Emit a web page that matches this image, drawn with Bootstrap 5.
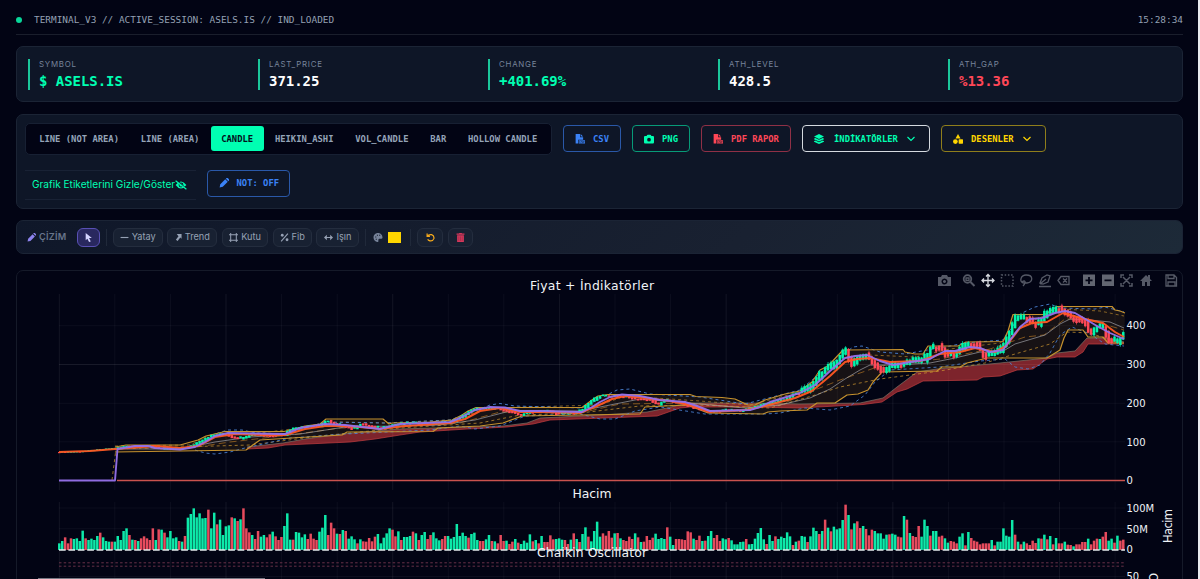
<!DOCTYPE html>
<html lang="tr" data-bs-theme="dark">
<head>
<meta charset="utf-8">
<meta name="viewport" content="width=device-width, initial-scale=1">
<title>Terminal V3</title>
<link href="https://cdn.jsdelivr.net/npm/bootstrap@5.3.0/dist/css/bootstrap.min.css" rel="stylesheet">
<style>
:root{--mint:#00ffb2;--rose:#ff4757;--azure:#3b82f6;--gold:#ffd500;--mono:"DejaVu Sans Mono",monospace}
body{background:#020414;font-family:Inter,sans-serif;height:579px;overflow:hidden;color:#8d99ad;border-right:2px solid #e9ebee}
.page{padding:0 15px 0 16px;height:579px;overflow:hidden}
.topline{height:35px;border-bottom:1px solid #1a1e2c;font:9.42px/14px var(--mono);color:#94a0b3;padding-top:5px}
.pulse{width:6px;height:6px;border-radius:50%;background:#08d79a;margin-right:12px}
.panel{background:#0e1627;border:1px solid #1b2435;border-radius:7px}
.stats{margin-top:11px;height:56px;padding:11.5px 0 0 11px}
.stat{width:230px;height:31px;border-left:2px solid #1bc79b;padding-left:9px}
.stat-name{font-size:7.9px;line-height:10px;letter-spacing:.75px;color:#77849a}
.stat-val{font:bold 14px/18px var(--mono);margin-top:3px;color:#fff;letter-spacing:-.05px}
.tools{margin-top:12px;height:95px;padding:7.5px 8px 8px 7.5px;column-gap:11px;row-gap:15px}
.seg{background:#020414;border:1px solid #172033;border-radius:5px;height:32px;padding:0 3px;width:527.5px;gap:.5px}
.seg .btn,.out{font:bold 8.86px/12px var(--mono);border-radius:3px;white-space:nowrap}
.seg .btn{color:#94a3b8;padding:0 10.65px;height:25px;border:0}
.seg .btn.active{background:var(--mint);color:#03101c}
.out{height:27px;border:1px solid;background:transparent;padding:0 0 0 11px;display:flex;align-items:center;border-radius:4px}
.out svg{width:10px;height:10px;margin-right:8px}
.out .chev{width:8px;height:8px;margin:0 0 0 9px}
.lbl{width:171px;height:30px;border:solid #192235;border-width:1px 0;font-size:10.1px;color:var(--mint);padding:1px 0 0 7.5px;white-space:nowrap}
.draw{margin-top:11px;height:34px;padding-left:10px;background:linear-gradient(135deg,#0f1729,#192131 62%,#1d2a38);font-size:9.2px;font-weight:500}
.draw svg{width:9px;height:9px}
.tb{height:19px;border:1px solid #242d3e;border-radius:6px;background:#182132;color:#96a1b4;gap:3px;margin-right:4.7px}
.tb.on{background:#29285f;border-color:#5950b5;color:#d4d3ff}
.sep{width:1px;height:17px;background:#20293a}
.chart{margin-top:16px;border:1px solid #151a29;border-radius:7px;height:330px}
.chart svg{display:block;margin:-1px}
.chart text{font-family:"DejaVu Sans",Verdana,sans-serif;fill:#f0f3f7}
.hbar{position:absolute;left:38px;top:578px;width:227px;height:1px;background:#777984}
</style>
</head>
<body>
<svg width="0" height="0" class="position-absolute">
<symbol id="pencil" viewBox="0 0 16 16"><path fill="currentColor" d="M1 15l1-5 8-8 4 4-8 8zM11 1l1-1h2l2 2v2l-1 1z"/></symbol>
<symbol id="camera" viewBox="0 0 512 512"><path fill="currentColor" d="M149 65l-10 31H64C29 96 0 125 0 160v256c0 35 29 64 64 64h384c35 0 64-29 64-64V160c0-35-29-64-64-64h-75l-10-31c-7-20-25-33-46-33H195c-21 0-39 13-46 33zM256 192a96 96 0 1 1 0 192 96 96 0 1 1 0-192z"/></symbol>
<symbol id="file" viewBox="0 0 16 16"><path fill="currentColor" d="M1 0h7v5h5v4H5v6H1zM9 0l4 4H9zM6 10h10v5H6z"/><path d="M9 11H7.500v3H9M12 11h-1.500v1.500H12V14h-1.500M13 11l1 3 1-3" fill="none" stroke="#0e1627" stroke-width=".7"/></symbol>
<symbol id="layers" viewBox="0 0 16 16"><path fill="currentColor" d="M8 0l8 4-8 4-8-4zM2 6.200L8 9l6-2.800 2 1.200v1L8 12 0 8.400v-1zM2 10.300L8 13l6-2.700 2 1.200v1L8 16 0 12.500v-1z"/></symbol>
<symbol id="shapes" viewBox="0 0 16 16"><path fill="currentColor" d="M8 0l4 7H4z"/><circle cx="3.800" cy="12" r="3.800" fill="currentColor"/><rect x="9" y="8.500" width="7" height="7" rx="1" fill="currentColor"/></symbol>
<symbol id="chev" viewBox="0 0 16 16"><path d="M1 4l7 7 7-7" fill="none" stroke="currentColor" stroke-width="2.400"/></symbol>
<symbol id="eye" viewBox="0 0 20 16"><path d="M1 8Q10-4 19 8Q10 20 1 8z" fill="currentColor"/><circle cx="10" cy="8" r="4" fill="#0e1627"/><circle cx="10" cy="8" r="2.500" fill="currentColor"/><path d="M2 0l18 15" stroke="#0e1627" stroke-width="2"/><path d="M1 1l18 14" stroke="currentColor" stroke-width="2"/></symbol>
</svg>
<div class="page">
  <header class="topline d-flex align-items-center"><span class="pulse"></span><span>TERMINAL_V3 // ACTIVE_SESSION: ASELS.IS // IND_LOADED</span><span class="ms-auto">15:28:34</span></header>

  <section class="panel stats d-flex">
    <div class="stat"><div class="stat-name">SYMBOL</div><div class="stat-val" style="color:var(--mint)">$ ASELS.IS</div></div>
    <div class="stat"><div class="stat-name">LAST_PRICE</div><div class="stat-val">371.25</div></div>
    <div class="stat"><div class="stat-name">CHANGE</div><div class="stat-val" style="color:var(--mint)">+401.69%</div></div>
    <div class="stat"><div class="stat-name">ATH_LEVEL</div><div class="stat-val">428.5</div></div>
    <div class="stat"><div class="stat-name">ATH_GAP</div><div class="stat-val" style="color:var(--rose)">%13.36</div></div>
  </section>

  <section class="panel tools d-flex flex-wrap align-content-start">
    <div class="seg d-flex align-items-center">
      <button class="btn">LINE (NOT AREA)</button><button class="btn">LINE (AREA)</button><button class="btn active">CANDLE</button><button class="btn">HEIKIN_ASHI</button><button class="btn">VOL_CANDLE</button><button class="btn">BAR</button><button class="btn">HOLLOW CANDLE</button>
    </div>
    <button class="out align-self-center" style="width:58px;color:#3b82f6;border-color:#2a58a8"><svg><use href="#file"/></svg>CSV</button>
    <button class="out align-self-center" style="width:58px;color:#00ffb2;border-color:#079b78"><svg><use href="#camera"/></svg>PNG</button>
    <button class="out align-self-center" style="width:90px;color:#ff4757;border-color:#8f3046"><svg><use href="#file"/></svg>PDF RAPOR</button>
    <button class="out align-self-center" style="width:128px;color:#00ffb2;border-color:#d5dae0"><svg style="margin-right:10px"><use href="#layers"/></svg>İNDİKATÖRLER<svg class="chev"><use href="#chev"/></svg></button>
    <button class="out align-self-center" style="width:105px;color:#ffd500;border-color:#8f7e1b"><svg><use href="#shapes"/></svg>DESENLER<svg class="chev"><use href="#chev"/></svg></button>
    <div class="lbl d-flex align-items-center">Grafik Etiketlerini Gizle/Göster<svg width="12" height="10"><use href="#eye"/></svg></div>
    <button class="out" style="width:83px;color:#3b82f6;border-color:#2a58a8"><svg><use href="#pencil"/></svg>NOT: OFF</button>
  </section>

  <section class="panel draw d-flex align-items-center">
    <svg style="color:#8d83ee;margin-right:3px"><use href="#pencil"/></svg><span style="width:38px;letter-spacing:.2px;color:#68758b;font-weight:600">ÇİZİM</span>
    <button class="tb on p-0 d-flex align-items-center justify-content-center" style="width:23px"><svg viewBox="0 0 16 16"><path fill="currentColor" d="M3 0v13l3-3 3 6 3-1-3-6h5z"/></svg></button>
    <i class="sep" style="margin:0 6px 0 1px"></i>
    <button class="tb p-0 d-flex align-items-center justify-content-center" style="width:50px"><svg viewBox="0 0 16 16"><path d="M1 8h14" stroke="currentColor" stroke-width="2"/></svg>Yatay</button>
    <button class="tb p-0 d-flex align-items-center justify-content-center" style="width:50px"><svg viewBox="0 0 16 16" style="width:7px"><path fill="currentColor" d="M4 0h11v11l-3-3-6 8-4-3 6-8z"/></svg>Trend</button>
    <button class="tb p-0 d-flex align-items-center justify-content-center" style="width:46px"><svg viewBox="0 0 16 16"><path fill="none" stroke="currentColor" stroke-width="1.800" d="M3 3h10v10H3zM0 3h16M0 13h16M3 0v16M13 0v16"/></svg>Kutu</button>
    <button class="tb p-0 d-flex align-items-center justify-content-center" style="width:39px"><svg viewBox="0 0 16 16"><path d="M2 15L14 1" stroke="currentColor" stroke-width="2"/><circle cx="4" cy="4" r="2.500" fill="currentColor"/><circle cx="12.500" cy="12" r="2.500" fill="currentColor"/></svg>Fib</button>
    <button class="tb p-0 d-flex align-items-center justify-content-center" style="width:43px"><svg viewBox="0 0 16 16"><path d="M0 8l5-5v4h6V3l5 5-5 5V9H5v4z" fill="currentColor"/></svg>Işın</button>
    <i class="sep" style="margin:0 7px 0 1px"></i>
    <svg viewBox="0 0 16 16" style="width:10px"><path fill="#77839a" fill-rule="evenodd" d="M8 0C3 0 0 4 0 8s3 8 7 8c3 0 1-3 2-5s7 1 7-3-3-8-8-8zM3 6h2v2H3zM6 3h2v2H6zM10 3h2v2h-2zM4 10h2v2H4z"/></svg>
    <span style="width:13px;height:11px;background:#ffd600;margin:0 9px 0 5px"></span><i class="sep" style="margin-right:6px"></i>
    <button class="tb p-0 d-flex align-items-center justify-content-center" style="width:26px"><svg viewBox="0 0 16 16"><path d="M2 1v5h5M2 6q3-4 8-3 5 2 4 7-2 5-7 4-3-1-4-3" fill="none" stroke="#f5a91c" stroke-width="2.200"/></svg></button>
    <button class="tb p-0 d-flex align-items-center justify-content-center" style="width:25px"><svg viewBox="0 0 16 16"><path fill="#d5375b" d="M1 1h4l1-1h4l1 1h4v2H1zM2 4h12v12H2z"/><path d="M5 6v8M8 6v8M11 6v8" stroke="#8d2942"/></svg></button>
  </section>

  <section class="chart"><svg id="plot" width="1167" height="330" viewBox="16 270 1167 330">
    <g id="grid"></g><g id="lines" fill="none"></g><g id="bars"></g>
    <path d="M59 550H1125" stroke="#e5ebed" stroke-width="1.300" stroke-dasharray="6.700 2.700"/>
    <path d="M59 562.800H1125M59 566.200H1125" stroke="#683148" stroke-dasharray="2.500 2.200"/>
    <g font-size="12.400" text-anchor="middle">
      <text x="592" y="290" textLength="124">Fiyat + İndikatörler</text><text x="592" y="497.500" textLength="39">Hacim</text><text x="592" y="557" textLength="110">Chaikin Oscillator</text>
      <text font-size="11.500" textLength="34" transform="translate(1172 526) rotate(-90)">Hacim</text><text font-size="11.500" text-anchor="end" transform="translate(1158 573) rotate(-90)">Chaikin O</text>
    </g>
    <g font-size="10" lengthAdjust="spacingAndGlyphs"><text x="1126.500" y="329">400</text><text x="1126.500" y="368">300</text><text x="1126.500" y="407">200</text><text x="1126.500" y="445.500">100</text><text x="1126.500" y="484">0</text><text x="1126.500" y="512">100M</text><text x="1126.500" y="532.500">50M</text><text x="1126.500" y="553">0</text><text x="1126.500" y="580">50</text></g>
    <g fill="none" stroke="#555966" stroke-width="1.300">
      <path fill="#555966" stroke="none" fill-rule="evenodd" d="M938 277h3l1-2h5l1 2h3v9h-13zM944.500 278.500a3 3 0 1 0 .01 0zM944.500 280a1.500 1.500 0 1 1-.01 0z"/>
      <circle cx="967.500" cy="279" r="3.800" stroke-width="1.800"/><path stroke-width="2" d="M970.500 282l4 4"/><path d="M966 278h3v2.500h-3z"/>
      <path stroke="#d8dbe1" d="M988 275v11M982.500 280.500h11M986 276.500l2-2 2 2M986 284.500l2 2 2-2M984 278.500l-2 2 2 2M992 278.500l2 2-2 2"/>
      <path stroke-width="1.500" stroke-dasharray="1.500 1.700" d="M1001.500 275h11.500v11h-11.500z"/>
      <path d="M1023 283c-4-2-2-8 3-8 8 0 7 7 1 8h-3c-2 0-2-2 0-2s1 3-1 5"/>
      <path d="M1040 283l2-5 5-3 3 1-2 6-5 2zM1040 284l6-5M1039 286.500h12"/>
      <path d="M1058 280.500l3-4h8v8h-8zM1063 278.500l4 4M1067 278.500l-4 4"/>
      <path fill="#626671" stroke="none" d="M1083 274.500h12v11.500h-12zM1102 274.500h12v11.500h-12z"/><path stroke="#020414" stroke-width="1.800" d="M1089 277v7M1085.500 280.300h7M1104.500 280.300h7"/>
      <path d="M1121 278v-3h3M1129 275h3v3M1132 283v3h-3M1124 286h-3v-3M1123 277l7 7M1130 277l-7 7" stroke-width="1.500"/>
      <path fill="#555966" stroke="none" d="M1140 281l6-6 2 2v-2h2v4l2 2h-2v5h-3v-4h-2v4h-3v-5z"/>
      <path d="M1166 275h8l2.500 2.500v8.500H1166zM1168 275v3.500h6V275M1168 286v-4h7v4"/>
    </g>
  </svg></section>
</div>
<div class="hbar"></div>
<script>
const NS='http://www.w3.org/2000/svg', $=id=>document.getElementById(id);
const add=(p,t,a)=>{const e=document.createElementNS(NS,t);for(const k in a)e.setAttribute(k,a[k]);p.appendChild(e);return e};
const pts=s=>s.trim().split(/\s+/).map(p=>p.split(',').map(Number));
const at=(P,x)=>{for(let i=1;i<P.length;i++)if(x<=P[i][0]){const a=P[i-1],b=P[i];return a[1]+(b[1]-a[1])*(x-a[0])/(b[0]-a[0])}return P[P.length-1][1]};
const STEP=2.923, X0=59.3;
for(let k=0;k<20;k++){const x=X0+55.57*k;add($('grid'),'path',{d:`M${x} 294V490M${x} 502V600`,stroke:'#fff','stroke-opacity':k%3?.045:.07})}
for(const y of [325.7,364.5,403.3,441.8,508,528.7,576.5])add($('grid'),'path',{d:`M59 ${y}H1125`,stroke:'#fff','stroke-opacity':y==364.5?.09:.045});

const price=pts(`59,452 80,451.5 100,449.5 115,448 126,446 150,445.5 160,449 180,449 190,447 200,441 206,438 213,435.5 225,434 232,437 240,438 255,433.5 265,436 285,434.5 288,430 300,427 310,426 320,427 326,420 332,424 345,426 352,429 360,424 372,427 380,428 392,425 410,423 430,424 452,421.5 460,418 468,412 476,409 500,408.5 508,412 520,415 530,412 548,411 558,414 575,413 582,410 590,402 598,396 620,396 635,399 650,400 657,405 665,400 680,403 695,408 710,412 725,410 740,411 755,407 765,404 775,402 785,400 793,394 800,393 808,389 815,380 820,373 832,366 843,352 846,350 850,365 857,358 866,356 875,365 882,370 895,365 910,362 925,358 930,348 940,347 945,355 955,354 965,345 975,345 985,356 993,355 1000,350 1006,340 1012,326 1015,318 1025,319 1035,325 1040,323 1045,314 1058,309 1067,314 1075,319 1085,323 1089,334 1095,328 1103,327 1108,340 1117,341 1124,335`);
const up=`115,447 126,445 180,445 198,440 206,436 225,431.5 284,431.5 290,430 305,426 320,424 326,419 383,419 389,424 392,423 430,422 452,420 462,415 468,411 476,407.5 582,407.5 592,400 598,396 608,394.5 690,394.5 696,396.5 722,397.5 735,399 748,405 755,405 765,400 785,394 800,391 812,382 820,370 828,366 843,350 903,349.5 905,352 915,354 923,354 928,346 958,346 966,342 1003,341.5 1008,331 1013,314.5 1045,314.5 1057,306.5 1112,306.5 1115,310 1120,311 1125,313`;
const low=`115,452 246,450 260,440 300,437.5 342,435 347,432 433,431.5 438,428 480,426 503,423 522,416 640,414 645,407 687,405 708,413 763,414 768,412 780,411 807,410 817,403 835,403 847,395 858,394 868,390 873,382 882,372 937,371 942,367 960,367 967,363 987,358 1047,358 1060,350 1064,338 1068,330 1083,330 1088,337 1103,337 1108,343 1124,343`;
const cloudTop=`247,447 265,445 283,443 305,439 342,434 400,429 503,426 527,423 540,418 600,415 647,412 667,408 687,403 750,403 800,404 860,403 883,398 897,387 917,372 937,369 1000,363 1047,358 1057,353 1075,351 1087,338 1107,338 1124,342`;
const cloudBot=`247,449 268,448 285,445 350,442 375,439 400,435 420,432 467,429 507,427 533,424 550,420 657,416 680,408 690,407 753,407 800,408 863,404.5 882,402 897,392 907,389 923,381 977,380 983,377 1000,376 1017,370 1033,369 1047,359 1057,357 1075,357 1083,352 1088,344 1124,344`;
const L=$('lines'), rev=s=>s.trim().split(/\s+/).reverse().join(' ');
const line=(p,c,w=1,o=1,d='none')=>add(L,'polyline',{points:p,stroke:c,'stroke-width':w,'stroke-opacity':o,'stroke-dasharray':d,'stroke-linejoin':'round'});
add(L,'polygon',{points:up+' '+rev(low),fill:'#f5a623','fill-opacity':.09});
add(L,'polygon',{points:cloudTop+' '+rev(cloudBot),fill:'#f04444','fill-opacity':.52});
line(cloudTop,'#797567',1,.7);line(cloudBot,'#c33d40',1,.7);
line('112,480 116,449 180,447 250,445 320,436 400,428 480,423 520,415 580,413 640,406 700,405 770,408 812,396 840,387 880,379 940,371 985,363 1015,354 1050,344 1067,332 1090,333 1124,345','#d29a30',1,.7,'3 3');
line('115,446 190,445 213,434 260,433 300,428 340,422 385,423 450,420 490,408 600,405 625,396 700,401 750,405 800,392 845,358 870,355 915,357 950,349 1000,343 1030,322 1060,309 1100,311 1124,316','#d29a30',1,.6,'3 3');
line('120,448 190,448 230,442 290,435 340,428 400,427 460,423 500,412 580,413 620,404 690,403 740,407 780,405 812,391 840,380 880,366 940,359 990,349 1025,337 1044,335 1065,319 1085,319 1124,330','#b97824',1,.65,'7 4');
line('195,444 207,439 218,433 228,430 242,430 256,433 285,434 325,422 385,423 450,420 475,411 490,405 500,403.5 515,406 550,407 582,408 605,396 617,390 630,389 650,394 700,397 745,404 800,390 845,353 853,347 862,346 880,352 905,354 950,346 965,343 1003,340 1022,313 1035,307 1050,304 1060,308 1095,309 1105,307 1124,312','#4a83d5',1,.9,'3 3');
line('195,450 205,453 215,454 230,452 245,448 290,438 345,434 430,430 460,426 475,429 500,426 525,416 580,414 600,419 615,419 635,411 660,407 705,414 765,414 780,413 805,408 830,410 850,406 865,395 875,382 890,370 940,367 980,361 1005,359 1015,367 1028,369 1040,365 1050,353 1060,335 1072,327 1090,334 1105,344 1124,346','#4a83d5',1,.85,'3 3');
line('118,449 180,449 215,442 250,437 300,434 345,427 440,425 475,420 510,411 580,411 610,405 640,399 700,404 745,408 780,405 810,398 830,389 845,379 860,370 870,365 895,365 930,363 955,358 980,352 1000,353 1015,344 1045,335 1060,324 1070,319 1090,320 1110,322 1124,328','#a9aab1',1,.65);
line(up,'#c6922e',1.2,1);line(low,'#c6922e',1.2,1);
/* candles follow the closing path */
for(let i=0;i<365;i++){const x=X0+i*STEP,c=at(price,x),o=at(price,x-STEP*1.2),amp=x>800?4.5:x>190?1.6:.5,n=Math.sin(i*12.9898)*43758.5453,r=n-Math.floor(n);
 const col=(o-c+(r-.5)*amp)>0?'#00f5ad':'#ff4958',top=Math.min(o,c)-r*amp,h=Math.max(1.2,Math.abs(o-c)+amp);
 add(L,'rect',{x:x-1.25,y:top,width:2.5,height:h,fill:col});
 if(x>800)add(L,'path',{d:`M${x} ${top-r*2}V${top+h+(1-r)*2}`,stroke:col,'stroke-width':.7})}
line('59,452 90,451 115,449 155,446 180,448 198,446 215,437 235,434 265,435 285,435 305,429 325,426 350,426 380,429 405,426 450,423 465,419 480,411 500,408 520,412 545,412 580,413 597,406 612,399 625,396 645,398 670,401 690,405 710,412 745,410 765,406 795,398 812,391 830,376 845,362 857,359 870,358 890,362 920,361 940,354 960,352 975,348 995,352 1006,346 1020,328 1032,323 1047,322 1063,313 1085,319 1103,323 1115,332 1124,337','#ff5722',2,.95);
line('117,480.5 1125,480.5','#c9524e',1.4);
line('59,480.5 115,480.5 117.5,449 135,446 148,446 155,448 180,449.5 195,447 205,442 215,436 228,433 285,434 300,428 325,424 345,425 380,429 400,424 450,422 460,418 475,410 490,407 505,407.500 520,411 540,411 582,412 592,407 600,402 610,397 622,394.500 640,396 660,400 685,402 697,406 710,411 750,410 760,407 770,402 800,393 815,385 830,371 845,358 855,356 867,355 880,361 893,365 910,362 930,359 937,355 945,351 955,351 970,347 980,348 990,352 1003,350 1010,340 1020,327 1030,319 1042,318 1055,313 1065,311 1075,313 1087,320 1097,326 1110,333 1124,339','#9470e8',1.9,.97);

/* volume: colour letter followed by bar height in thirds of a pixel */
const vol=`g20 g27 r38 r20 r35 g33 g35 g27 g58 r35 g30 g34 g30 g42 r52 g38 g27 g25 r25 g25 g42 g30 g57 g65 r45 g31 r30 g27 r35 r41 r35 r30 r65 g30 r62 g61 r52 g38 g57 g35 g38 r27 g25 r42 g97 g108 g125 g98 g110 g95 g96 r121 g65 g112 r77 g91 g45 g71 g74 r98 g95 r87 g92 r125 r65 r53 g45 r33 r57 g40 g45 r38 r47 g55 r41 r30 r39 g72 g110 g31 r31 g54 g52 g38 g47 r33 r49 r34 r30 g55 g67 g105 r45 r82 r65 g49 r48 g60 r57 g34 g41 g32 r20 g32 r26 r25 r36 r26 r40 g48 g20 g37 g50 g65 r61 r41 g56 r30 g39 g39 g42 r55 g50 r30 g45 g54 r33 r45 g53 g35 g29 r33 r42 g42 g34 g39 g78 g42 g52 g42 r37 g48 g52 g30 r27 r27 g32 g45 r27 g26 r20 r45 r27 g28 r18 r25 g33 r22 g18 g28 g22 g47 r26 g30 r20 g42 r24 r24 r44 r32 g33 g35 g31 r30 r18 g31 r50 g33 r24 g48 g68 r40 g26 g57 g85 g40 r50 r43 r57 r37 g50 r51 g35 r30 r27 r40 r33 g50 r38 g24 r25 r42 r30 r37 g49 g33 g36 g33 r68 g40 g15 r33 r33 r32 r30 r56 r53 g34 r30 r43 g27 r28 g42 g57 r36 r45 r27 g35 g32 r36 g29 g17 g17 g24 g25 r33 g17 g18 g34 g51 g66 g32 r18 g45 g27 r41 g33 g40 g36 g53 g41 r15 g25 r28 g42 g40 r24 g41 g67 g57 r48 g57 r91 g67 r56 g70 g62 g65 g90 r136 g105 r62 g80 r86 r66 g72 r63 r44 r61 g57 g50 g50 g34 g46 r47 g49 g46 r40 r38 g102 r91 g51 r42 r39 r72 g40 g91 g72 r43 g57 g57 r40 r43 g35 g22 r27 r25 r20 g40 g50 r14 g54 r36 r28 r25 r17 r20 r20 r20 g30 r14 g25 g25 g65 g43 g40 g90 r46 g25 r17 g25 r20 r15 r28 r21 g35 r34 g46 r32 g42 r17 g36 r20 r20 g25 r16 r15 g11 r17 r17 r24 r24 g34 r17 r28 r34 g33 r40 r54 g28 g34 r22 g43 r28 r31`.split(' ');
vol.forEach((v,i)=>{const h=v.slice(1)/3;add($('bars'),'rect',{x:X0+i*STEP-1.25,y:550-h,width:2.5,height:h,fill:v[0]=='g'?'#0de9a9':'#e64b5d'})});
</script>
<script src="https://cdn.jsdelivr.net/npm/bootstrap@5.3.0/dist/js/bootstrap.bundle.min.js"></script>
</body>
</html>
